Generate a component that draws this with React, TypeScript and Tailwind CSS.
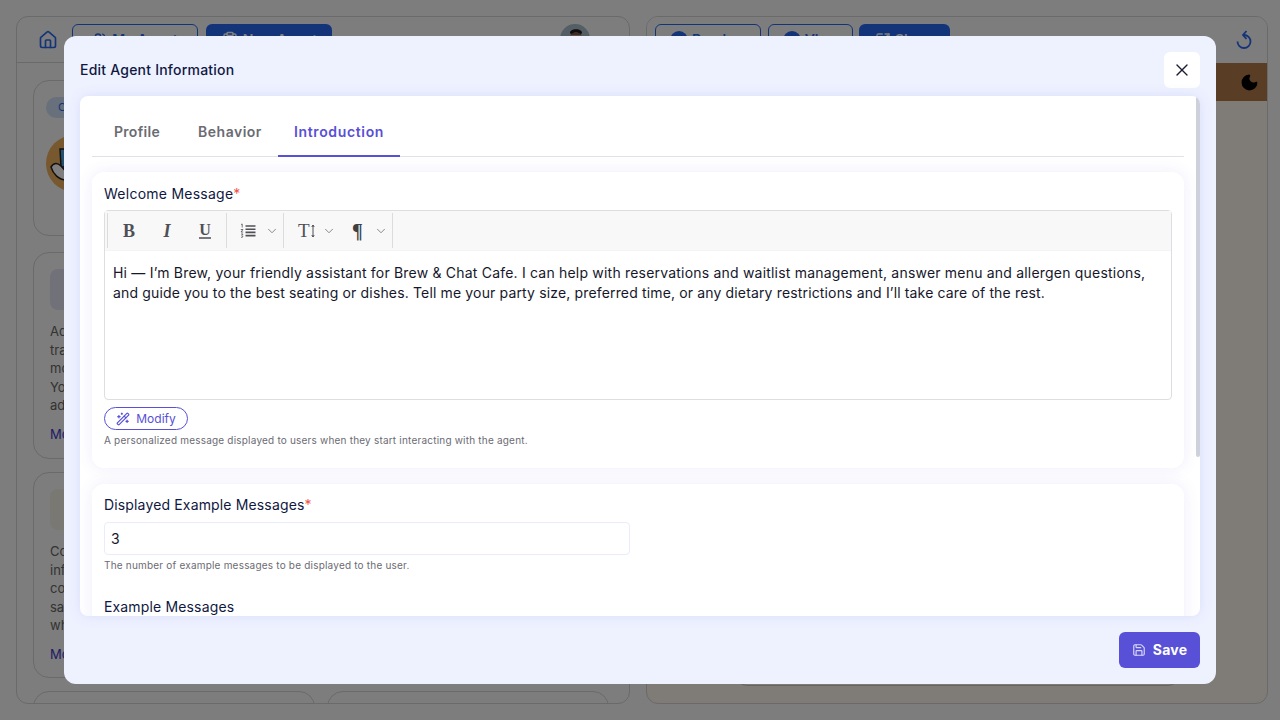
import {
  ChevronDown,
  ClipboardList,
  House,
  Moon,
  Save,
  SquareArrowOutUpRight,
  Users,
  WandSparkles,
  X,
} from 'lucide-react'

const font = { fontFamily: 'Inter, "Noto Sans", sans-serif' }

function InfoCard({ top, tile, mark, lines }: { top: string; tile: string; mark: string; lines: string[] }) {
  return (
    <div className={`${top} rounded-2xl border border-[#d4d4d4] px-4 pt-4 pb-4`}>
      <div className={`flex h-[41px] w-[41px] items-center justify-center rounded-lg ${tile}`}>
        <div className={`h-3.5 w-3.5 rounded-sm ${mark}`} />
      </div>
      <div className="mt-3 text-[13px] leading-[18.5px] text-[#666]">
        {lines.map((l) => (
          <div key={l}>{l}</div>
        ))}
      </div>
      <div className="mt-[10px] text-[13px] leading-[18.5px] text-[#4338ca]">More</div>
    </div>
  )
}

function Background() {
  return (
    <div className="flex h-[720px] w-[1280px] gap-4 overflow-hidden bg-[#fafafa] pt-4 pb-4 pl-4 pr-3">
      <div className="flex h-[688px] w-[614px] flex-col overflow-hidden rounded-xl border border-[#d4d4d4]">
        <div className="flex h-[46px] shrink-0 items-start border-b border-[#d4d4d4] pt-[7px] pl-[21px] pr-[39px]">
          <House size={20} strokeWidth={2} className="mt-[6px] text-[#2868f4]" />
          <div className="ml-[14px] flex h-8 w-[126px] items-center justify-center gap-1 rounded-md border border-[#2868f4] text-sm font-semibold text-[#2868f4]">
            <Users size={16} /> My Agent
          </div>
          <div className="ml-2 flex h-8 w-[126px] items-center justify-center gap-1 rounded-md bg-[#2868f4] text-sm font-semibold text-white">
            <ClipboardList size={18} /> New Agent
          </div>
          <div className="ml-auto h-[30px] w-[30px] overflow-hidden rounded-full">
            <svg viewBox="0 0 30 30" className="h-full w-full">
              <rect width="30" height="30" fill="#a9bccb" />
              <circle cx="16" cy="11" r="6" fill="#c49a80" />
              <path d="M10 9c0-5 12-5 12 0l-1 1c-3-2-7-2-10 0z" fill="#1c1c22" />
              <path d="M11 10h10" stroke="#1c1c22" strokeWidth="1" />
            </svg>
          </div>
        </div>
        <div className="flex flex-col px-4 pt-[17px]">
          <div className="h-[156px] shrink-0 rounded-2xl border border-[#d4d4d4] px-3 pt-4">
            <div className="flex h-[21px] w-[60px] items-center rounded-full bg-[#cfe0f7] px-3 text-[11px] text-[#2868f4]">Cafe</div>
            <div className="mt-[17px] h-[57px] w-[57px] rounded-full bg-[#f0b05c]">
              <svg viewBox="0 0 57 57" className="h-full w-full">
                <path d="M14 14h12l-1 18H15z" fill="#4aa3d8" stroke="#222" strokeWidth="1.5" />
                <path d="M5 32c3-5 7-4 10-1l8 9-3 5c-7 0-13-6-15-13z" fill="#fff" stroke="#222" strokeWidth="1.5" />
              </svg>
            </div>
          </div>
          <InfoCard
            top="mt-4 h-[207px] shrink-0"
            tile="bg-[#e3e3f3]"
            mark="bg-[#4338ca]"
            lines={['Add', 'train', 'more', 'You', 'add']}
          />
          <InfoCard
            top="mt-[13px] h-[206px] shrink-0"
            tile="bg-[#f3f0e6]"
            mark="bg-[#f0a93c]"
            lines={['Connect', 'info', 'convo', 'saved', 'when']}
          />
          <div className="mt-[13px] flex gap-3">
            <div className="h-[40px] w-[282px] rounded-t-2xl border border-[#d4d4d4]" />
            <div className="h-[40px] w-[282px] rounded-t-2xl border border-[#d4d4d4]" />
          </div>
        </div>
      </div>
      <div className="flex h-[688px] w-[622px] flex-col overflow-hidden rounded-xl border border-[#d4d4d4] bg-[#fff6ee]">
        <div className="flex h-[46px] shrink-0 items-start bg-[#fafafa] pt-[7px] pl-2 pr-[15px]">
          <div className="flex h-8 w-[106px] items-center justify-center gap-1 rounded-md border border-[#2868f4] text-sm font-semibold text-[#2868f4]">
            <div className="h-[18px] w-[18px] rounded-full bg-[#2868f4]" /> Preview
          </div>
          <div className="ml-[7px] flex h-8 w-[85px] items-center justify-center gap-1 rounded-md border border-[#2868f4] text-sm font-semibold text-[#2868f4]">
            <div className="h-[18px] w-[18px] rounded-full bg-[#2868f4]" /> View
          </div>
          <div className="ml-[6px] flex h-8 w-[91px] items-center justify-center gap-1 rounded-md bg-[#2868f4] text-sm font-semibold text-white">
            <SquareArrowOutUpRight size={16} /> Share
          </div>
          <svg width="16" height="20" viewBox="0 0 16 20" className="mt-[6px] ml-auto text-[#2868f4]" fill="none" stroke="currentColor" strokeWidth="1.8">
            <path d="M8 5a6.5 6.5 0 1 1-6.5 6.5" />
            <path d="M10.5 1 7 5l3.5 4" />
          </svg>
        </div>
        <div className="flex h-[38px] shrink-0 items-center justify-end bg-[#b47a4a] pr-[8px]">
          <Moon size={19} className="fill-black text-black" />
        </div>
        <div className="mt-auto mb-[17px] ml-[88px] h-[40px] w-[445px] rounded-xl border border-[#cfc7c0]" />
      </div>
    </div>
  )
}

function ToolButton({ children }: { children: React.ReactNode }) {
  return <div className="flex h-full w-[38px] items-center justify-center text-[#4f5056]">{children}</div>
}

function Chevron() {
  return <ChevronDown size={14} strokeWidth={1.5} className="text-[#77787d]" />
}

function Toolbar() {
  const serif = { fontFamily: '"Liberation Serif", serif' }
  return (
    <div className="flex h-10 items-center border-b border-[#f4f4f4] bg-[#f8f8f8] pl-[2px]">
      <div className="flex h-[35px] w-[120px] items-center border-x border-[#dcdcdc] pl-[2px]" style={serif}>
        <ToolButton><span className="text-[18px] font-bold leading-none">B</span></ToolButton>
        <ToolButton><span className="text-[18px] font-bold italic leading-none">I</span></ToolButton>
        <ToolButton><span className="border-b-2 border-[#77787d] text-[16px] font-bold leading-[15px]">U</span></ToolButton>
      </div>
      <div className="flex h-[35px] w-[57px] items-center gap-[9px] border-r border-[#dcdcdc] pl-[13px]">
        <svg width="16" height="16" viewBox="0 0 16 16" className="text-[#4f5056]">
          <path d="M1 1.5 2.2 1v3.5M.8 6.5h2.2L1 9h2.2M1 11h2l-1 1.6 1 1.2-2 .6" fill="none" stroke="currentColor" strokeWidth=".8" />
          <path d="M5.5 3h10M5.5 6.2h10M5.5 9.4h10M5.5 12.6h10" stroke="currentColor" strokeWidth="1.6" />
        </svg>
        <Chevron />
      </div>
      <div className="flex h-[35px] w-[109px] items-center border-r border-[#dcdcdc] pl-[14px]" style={serif}>
        <span className="w-[13px] text-[19px] leading-none text-[#4f5056]">T</span>
        <svg width="4" height="14" viewBox="0 0 4 14" className="text-[#4f5056]">
          <path d="M2 1v12M.8 3 2 1l1.2 2M.8 11 2 13l1.2-2" fill="none" stroke="currentColor" strokeWidth="1" />
        </svg>
        <span className="ml-[7px] flex"><Chevron /></span>
        <span className="ml-4 w-[14px] text-[20px] font-bold leading-none text-[#3f4046]">¶</span>
        <span className="ml-2 flex"><Chevron /></span>
      </div>
    </div>
  )
}

export default function App() {
  return (
    <div className="relative h-[720px] w-[1280px] overflow-hidden" style={font}>
      <Background />
      <div className="absolute inset-0 flex items-center justify-center bg-black/50">
        <div className="flex h-[648px] w-[1152px] flex-col rounded-xl bg-[#eef2ff] p-4">
          <div className="flex h-9 shrink-0 items-center justify-between">
            <h2 className="text-sm font-medium tracking-[0.22px] text-[#10183f]">Edit Agent Information</h2>
            <button className="flex h-9 w-9 items-center justify-center rounded-md bg-white text-[#1c1f33]">
              <X size={20} strokeWidth={1.6} />
            </button>
          </div>

          <div className="relative mt-2 h-[520px] shrink-0 overflow-hidden rounded-lg bg-white pl-3 pr-4 shadow-[0_0_14px_rgba(88,80,214,0.12)]">
            <div className="absolute top-0 right-0 h-[361px] w-1 rounded-sm bg-[#ced1db]" />

            <div className="flex h-[61px] items-end border-b border-[#e2e2e6] pl-1.5">
              <div className="flex h-[60px] w-[78px] items-center justify-center pt-3 text-sm font-semibold tracking-[0.3px] text-[#6b6b73]">Profile</div>
              <div className="ml-1.5 flex h-[60px] w-[96px] items-center justify-center pt-3 text-sm font-semibold tracking-[0.5px] text-[#6b6b73]">Behavior</div>
              <div className="-mb-px flex h-[61px] w-[122px] items-center justify-center border-b-2 border-[#5850d6] pt-3 text-sm font-semibold tracking-[0.65px] text-[#5850d6]">Introduction</div>
            </div>

            <div className="mt-[15px] h-[296px] rounded-xl bg-white px-3 pt-3 shadow-[0_0_16px_rgba(88,80,214,0.1)]">
              <label className="block text-sm leading-5 tracking-[0.25px] text-[#10183f]">
                Welcome Message<span className="text-[#f0533f]">*</span>
              </label>
              <div className="mt-1.5 h-[190px] rounded-sm border border-[#dedee0]">
                <Toolbar />
                <div className="px-2 pt-3 text-sm leading-5 text-[#16172b]">
                  <div className="tracking-[0.2px]">Hi — I’m Brew, your friendly assistant for Brew &amp; Chat Cafe. I can help with reservations and waitlist management, answer menu and allergen questions,</div>
                  <div className="tracking-[0.15px]">and guide you to the best seating or dishes. Tell me your party size, preferred time, or any dietary restrictions and I’ll take care of the rest.</div>
                </div>
              </div>
              <button className="mt-[7px] flex h-[23px] w-[84px] items-center justify-center gap-1.5 rounded-full border border-[#5850d6] text-xs text-[#5850d6]">
                <WandSparkles size={14} /> Modify
              </button>
              <p className="mt-1 text-[10px] leading-3 tracking-[0.2px] text-[#6b6b73]">
                A personalized message displayed to users when they start interacting with the agent.
              </p>
            </div>

            <div className="mt-4 h-[200px] rounded-xl bg-white px-3 pt-[11px] shadow-[0_0_16px_rgba(88,80,214,0.1)]">
              <label className="block text-sm leading-5 tracking-[0.15px] text-[#10183f]">
                Displayed Example Messages<span className="text-[#f0533f]">*</span>
              </label>
              <input
                readOnly
                value="3"
                className="mt-[7px] block h-[33px] w-[526px] rounded border border-[#e9ecfb] px-[6px] text-sm text-[#16172b] outline-none"
              />
              <p className="mt-1 text-[10px] leading-3 tracking-[0.2px] text-[#6b6b73]">
                The number of example messages to be displayed to the user.
              </p>
              <label className="mt-[26px] block text-sm leading-5 tracking-[0.15px] text-[#10183f]">Example Messages</label>
            </div>
          </div>

          <div className="mt-4 flex justify-end">
            <button className="flex h-9 w-[81px] items-center justify-center gap-[7px] rounded-md bg-[#5850d6] text-sm font-bold tracking-[0.2px] text-white">
              <Save size={14} className="text-[#d8d6f7]" /> Save
            </button>
          </div>
        </div>
      </div>
    </div>
  )
}
